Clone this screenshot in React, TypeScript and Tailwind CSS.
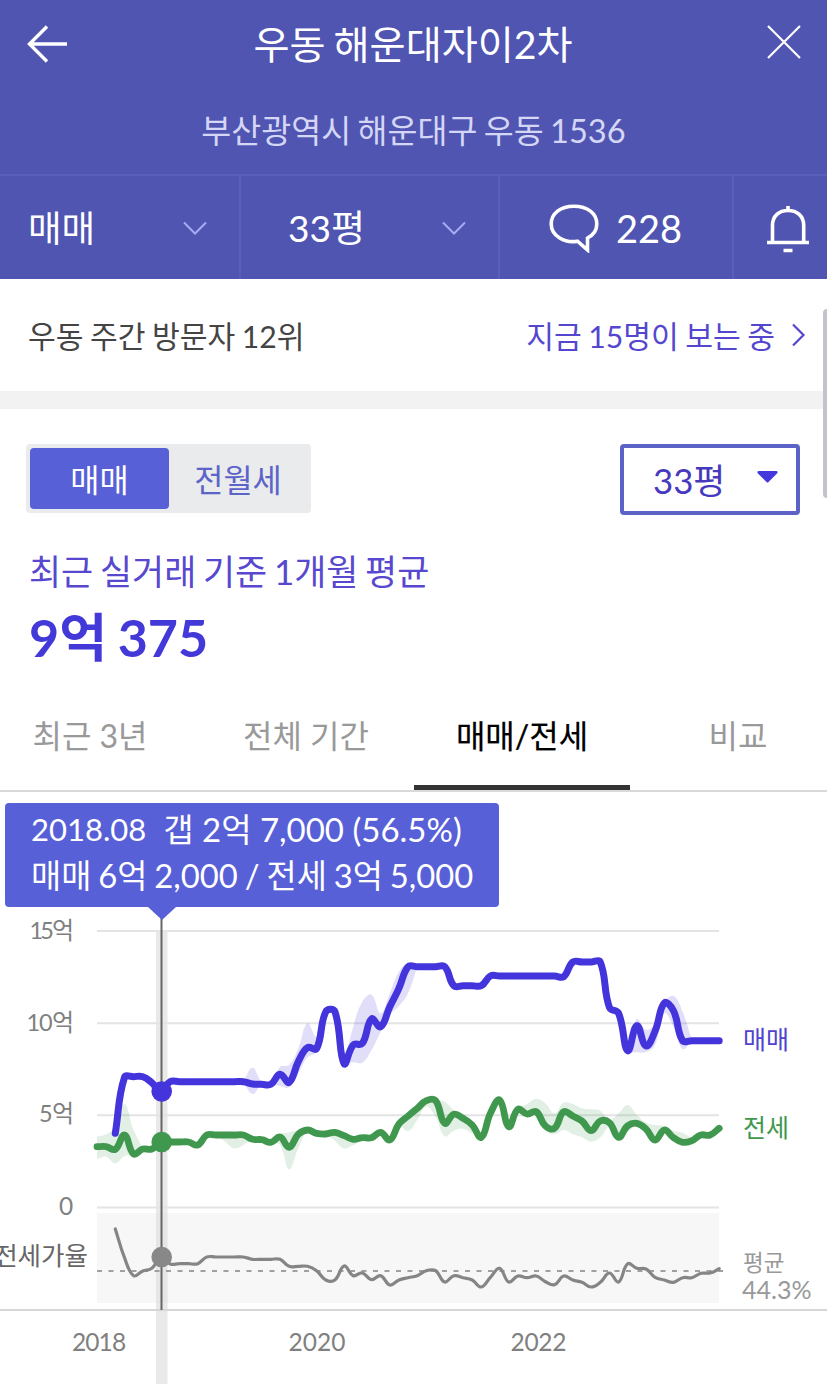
import React from "react";

const FONT = "font-['Lato','Noto_Sans_CJK_KR',sans-serif]";

const X0 = 97;
const STEP = 9.15;
const TOP = 900;
const TENSION = 0.42;

type Pt = [number, number];

// Spline whose handles are weighted by the distance to each neighbour.
function smooth(pts: Pt[], start: "M" | "L" = "M"): string {
  const n = pts.length;
  const handles = pts.map((p, i) => {
    const a = pts[Math.max(0, i - 1)];
    const b = pts[Math.min(n - 1, i + 1)];
    const da = Math.hypot(p[0] - a[0], p[1] - a[1]);
    const db = Math.hypot(b[0] - p[0], b[1] - p[1]);
    const fa = (TENSION * da) / (da + db);
    const fb = (TENSION * db) / (da + db);
    const dx = b[0] - a[0];
    const dy = b[1] - a[1];
    return [p[0] - fa * dx, p[1] - fa * dy, p[0] + fb * dx, p[1] + fb * dy];
  });
  let out = `${start}${pts[0][0].toFixed(1)},${pts[0][1].toFixed(1)}`;
  for (let i = 0; i < n - 1; i++) {
    const h = handles[i];
    const k = handles[i + 1];
    out += `C${h[2].toFixed(1)},${h[3].toFixed(1)} ${k[0].toFixed(1)},${k[1].toFixed(1)} ${pts[i + 1][0].toFixed(1)},${pts[i + 1][1].toFixed(1)}`;
  }
  return out;
}

const series = (from: number, v: number[], top = TOP): Pt[] =>
  v.map((y, i) => [X0 + STEP * (from + i), top + y / 3]);

function band(from: number, upper: number[], lower: number[]): string {
  const back = series(from, lower).reverse();
  return smooth(series(from, upper)) + smooth(back, "L") + "Z";
}

const SALE = series(2, [
  700, 532, 530, 530, 548, 574, 545, 545, 545, 545, 545, 545, 545, 545, 545, 552, 553, 553, 523, 547, 485, 443, 446,
  335, 335, 491, 435, 430, 357, 380, 320, 265, 200, 200, 200, 200, 200, 257, 257, 257, 257, 228, 228, 228, 228, 228,
  228, 228, 228, 230, 186, 186, 186, 186, 322, 340, 452, 377, 438, 393, 309, 332, 422, 422, 422, 422, 422,
]);

const LEASE = series(0, [
  740, 740, 748, 705, 762, 747, 747, 726, 726, 726, 726, 735, 705, 705, 705, 705, 705, 718, 719, 727, 711, 742, 703,
  690, 700, 702, 697, 707, 718, 713, 713, 697, 720, 672, 648, 625, 602, 602, 670, 643, 655, 675, 712, 640, 600, 680,
  628, 642, 635, 678, 685, 635, 648, 663, 692, 663, 668, 712, 677, 670, 687, 720, 690, 713, 727, 722, 705, 705, 685,
]);

const RATIO = series(
  2,
  [
    147, 233, 287, 273, 265, 230, 252, 251, 251, 251, 231, 231, 231, 231, 231, 238, 238, 238, 238, 259, 259, 259, 272,
    300, 300, 258, 287, 279, 299, 287, 315, 300, 293, 287, 272, 272, 306, 287, 293, 300, 321, 292, 265, 306, 288, 293,
    288, 305, 314, 288, 300, 307, 321, 307, 279, 306, 251, 265, 267, 292, 300, 307, 293, 293, 280, 279, 266,
  ],
  1180,
);

const SALE_BANDS = [
  band(16, [545, 503, 545, 553, 500, 495, 445, 370, 410, 330], [545, 582, 555, 553, 558, 562, 520, 472, 455, 330]),
  band(27, [493, 380, 305, 284, 340, 280, 215, 190, 200], [493, 487, 488, 450, 395, 345, 318, 280, 200]),
  band(57, [340, 440, 357, 390, 370, 308, 288, 335, 420], [340, 452, 457, 456, 435, 340, 380, 447, 424]),
];

const LEASE_BANDS = [
  band(0, [710, 703, 680, 612, 690, 745], [777, 770, 790, 768, 765, 750]),
  band(13, [705, 705, 705, 705, 718], [705, 725, 745, 735, 718]),
  band(
    19,
    [725, 703, 697, 690, 683, 695, 690, 690, 697, 710, 706, 700, 692],
    [727, 735, 808, 745, 695, 702, 706, 722, 745, 735, 722, 713, 697],
  ),
  band(33, [672, 640, 620, 600, 600, 605, 630, 645, 665, 712], [672, 693, 660, 620, 650, 709, 692, 686, 700, 712]),
  band(
    45,
    [680, 628, 612, 597, 610, 640, 608, 612, 625, 628, 632, 660, 640, 615, 645, 668, 675, 678, 692, 698, 715],
    [680, 632, 650, 645, 690, 703, 690, 702, 712, 725, 712, 680, 712, 695, 680, 695, 720, 700, 716, 727, 722],
  ),
];

function Chevron() {
  return (
    <svg width="24" height="14" viewBox="0 0 24 14" fill="none" stroke="#a9abf3" strokeWidth="2">
      <path d="M1 1.5 12 12.5 23 1.5" />
    </svg>
  );
}

function Header() {
  return (
    <header className="h-[279px] bg-[#4f55b1] text-white">
      <div className="flex h-[88px] items-center justify-between pl-[27px] pr-[26px]">
        <svg width="42" height="38" viewBox="0 0 42 38" fill="none" stroke="white" strokeWidth="3.4">
          <path d="M20 1.5 2.5 19 20 36.5M2.5 19H40" />
        </svg>
        <h1 className="mr-2.5 text-[39.2px] leading-[60px] [word-spacing:-2px]">우동 해운대자이2차</h1>
        <svg className="mb-1" width="34" height="34" viewBox="0 0 34 34" fill="none" stroke="white" strokeWidth="2.2">
          <path d="M1 1 33 33M33 1 1 33" />
        </svg>
      </div>
      <p className="h-[86px] text-center text-[32.6px] leading-[86px] text-[#d5d6f5] [word-spacing:-2px]">
        부산광역시 해운대구 우동 1536
      </p>
      <nav className="flex h-[105px] border-t-2 border-[#5a60ba] text-[36.5px] leading-[110px]">
        <button className="flex w-[241px] items-center justify-between border-r-2 border-[#5a60ba] pl-7 pr-8">
          매매
          <Chevron />
        </button>
        <button className="flex w-[259px] items-center justify-between border-r-2 border-[#5a60ba] pl-[47px] pr-8">
          <span className="text-[37px]">33평</span>
          <Chevron />
        </button>
        <button className="flex w-[234px] items-center gap-[17px] border-r-2 border-[#5a60ba] pl-[49px] text-[38px]">
          <svg width="50" height="50" viewBox="0 0 50 50" fill="none" stroke="white" strokeWidth="3.6">
            <path d="M28.5 38.2C16 40.500 2.200 33 2.200 21 2.200 10.500 11.500 3.200 25 3.200S47.800 10.500 47.800 21C47.800 27.500 44.500 32 38.500 35V47Z" />
          </svg>
          228
        </button>
        <button className="flex flex-1 items-center pl-[33px] pt-[3px]">
          <svg width="43" height="48" viewBox="0 0 43 48" fill="none" stroke="white" strokeWidth="3.6">
            <path d="M0 37.500H42M5.500 37.500V20.500C5.500 11 12 5.500 21 5.500S36.700 11 36.700 20.500V37.500M21 5.500V1M16.500 45.500H25.500" />
          </svg>
        </button>
      </nav>
    </header>
  );
}

function Visitors() {
  return (
    <section className="flex h-[130px] items-center justify-between border-b-[18px] border-[#f2f2f2] pl-7 pr-[21px] pt-0.5 text-[30.2px] leading-[44px] [word-spacing:-1.300px]">
      <span className="text-[#444]">우동 주간 방문자 12위</span>
      <span className="flex items-center gap-[17px] text-[#5446cf]">
        지금 15명이 보는 중
        <svg className="mb-0.5" width="14" height="24" viewBox="0 0 14 24" fill="none" stroke="currentColor" strokeWidth="2.200">
          <path d="M1 1.500 11.500 12 1 22.500" />
        </svg>
      </span>
    </section>
  );
}

function Summary() {
  return (
    <section className="h-[283px] px-[26px] pt-[35px]">
      <div className="flex items-start justify-between">
        <div className="flex h-[69px] w-[285px] rounded bg-[#e9ebed] p-1 text-[31.700px] leading-[61px]">
          <button className="h-[61px] w-[139px] rounded bg-[#5860d8] pt-0.5 text-white">매매</button>
          <button className="flex-1 pt-0.5 text-[#5c63c9]">전월세</button>
        </div>
        <button className="mr-px flex h-[71px] w-[180px] items-center justify-between rounded border-4 border-[#5d63c6] pl-[29px] pr-[18px] text-[34.800px] leading-[63px] text-[#4639bd]">
          <span className="pt-px">33평</span>
          <svg className="mb-[5px]" width="21" height="13" viewBox="0 0 21 13" fill="#4338dc">
            <path d="M1.500 0H19.500Q21.500 0.500 20 2.500L11.500 11Q10.500 12 9.500 11L1 2.500Q-0.500 0.500 1.500 0Z" />
          </svg>
        </button>
      </div>
      <p className="mt-8 pl-[3px] text-[34.900px] leading-[50px] text-[#5748cf] [word-spacing:-2.200px]">
        최근 실거래 기준 1개월 평균
      </p>
      <p className="mt-2 pl-[3px] text-[52px] font-bold leading-[64px] text-[#4338d8] [word-spacing:-2px]">9억 375</p>
    </section>
  );
}

function Tabs() {
  return (
    <div className="flex h-[100px] border-b-2 border-[#d9d9d9] text-[32px] leading-[44px] text-[#999]">
      <button className="w-[198px] pb-[11px] pr-[18px]">최근 3년</button>
      <button className="w-[216px] pb-[11px]">전체 기간</button>
      <button className="h-[98px] w-[216px] border-b-[5px] border-[#333] pb-1.5 text-black [-webkit-text-stroke:0.200px_black]">
        매매/전세
      </button>
      <button className="flex-1 pb-[11px] pl-[19px]">비교</button>
    </div>
  );
}

function Chart() {
  return (
    <section className="relative h-[592px]">
      <svg className="block" width="827" height="592" viewBox="0 792 827 592">
        <rect x="156" y="930" width="11.500" height="454" fill="#e9e9e9" />
        <rect x="97" y="1213" width="622" height="90" fill="#f7f7f7" />
        <rect x="156" y="1213" width="11.500" height="90" fill="#e6e6e6" />
        <path d="M97 931H719M97 1023.300H719M97 1115.300H719M97 1207.500H719" stroke="#e4e4e4" strokeWidth="2" />
        <path d="M0 1310H827" stroke="#d6d6d6" strokeWidth="2" />
        <path d="M97 1271H724" stroke="#a0a0a0" strokeWidth="2" strokeDasharray="5 6.500" />
        <g fill="#4a9c5b" fillOpacity="0.160">
          {LEASE_BANDS.map((d, i) => (
            <path key={i} d={d} />
          ))}
        </g>
        <g fill="#4633dc" fillOpacity="0.160">
          {SALE_BANDS.map((d, i) => (
            <path key={i} d={d} />
          ))}
        </g>
        <path d="M161.500 912V1310" stroke="#666" strokeWidth="2" />
        <g fill="none" strokeLinecap="round" strokeLinejoin="round">
          <path d={smooth(RATIO)} stroke="#858585" strokeWidth="3.200" />
          <path d={smooth(LEASE)} stroke="#40984f" strokeWidth="6.800" />
          <path d={smooth(SALE)} stroke="#4334dc" strokeWidth="7" />
        </g>
        <circle cx="161.700" cy="1091.500" r="10.300" fill="#4334dc" />
        <circle cx="161.700" cy="1142" r="10.300" fill="#40984f" />
        <circle cx="161.700" cy="1257" r="10.300" fill="#888" />
        <g fill="#808080" fontSize="24.500">
          <text x="29.500" y="939" fontSize="23.500" letterSpacing="-3">
            15
          </text>
          <text x="52" y="939" fontSize="24">
            억
          </text>
          <text x="26.500" y="1031" fontSize="23.500" letterSpacing="-1.200">
            10
          </text>
          <text x="52" y="1031" fontSize="24">
            억
          </text>
          <text x="39" y="1122" fontSize="23.500">
            5
          </text>
          <text x="52" y="1122" fontSize="24">
            억
          </text>
          <text x="59" y="1215">0</text>
          <text x="88" y="1265" textAnchor="end" fill="#666" fontSize="25.500">
            전세가율
          </text>
          <text x="72" y="1351" letterSpacing="-0.900">
            2018
          </text>
          <text x="288.500" y="1351">2020</text>
          <text x="510.500" y="1351" letterSpacing="-0.300">
            2022
          </text>
          <text x="743" y="1049" fill="#4f43cf" fontSize="25">
            매매
          </text>
          <text x="743" y="1137" fill="#40984f" fontSize="25">
            전세
          </text>
          <text x="743" y="1271" fill="#999" fontSize="22.500">
            평균
          </text>
          <text x="742" y="1299" fill="#999" fontSize="25">
            44.3%
          </text>
        </g>
      </svg>
      <div className="absolute left-[5px] top-[11px] h-[104px] w-[494px] rounded bg-[#5860d8] pl-[26px] pt-[3px] text-[33px] leading-[46px] text-white">
        <div className="flex gap-[17px] whitespace-nowrap">
          <span className="text-[31px]">2018.08</span>
          <span>갭 2억 7,000 (56.5%)</span>
        </div>
        <div className="whitespace-nowrap pt-px text-[32.800px] [word-spacing:-1.500px]">
          매매 6억 2,000 / 전세 3억 5,000
        </div>
        <svg className="absolute left-[143px] top-[104px]" width="28" height="13" viewBox="0 0 28 13" fill="#5860d8">
          <path d="M0 0H28L14 13Z" />
        </svg>
      </div>
    </section>
  );
}

export default function App() {
  return (
    <main className={`relative h-[1384px] w-[827px] overflow-hidden bg-white ${FONT}`}>
      <Header />
      <Visitors />
      <Summary />
      <Tabs />
      <Chart />
      <div className="absolute right-0 top-[309px] h-[189px] w-1 rounded-l bg-[#c4c2cb]" />
    </main>
  );
}
